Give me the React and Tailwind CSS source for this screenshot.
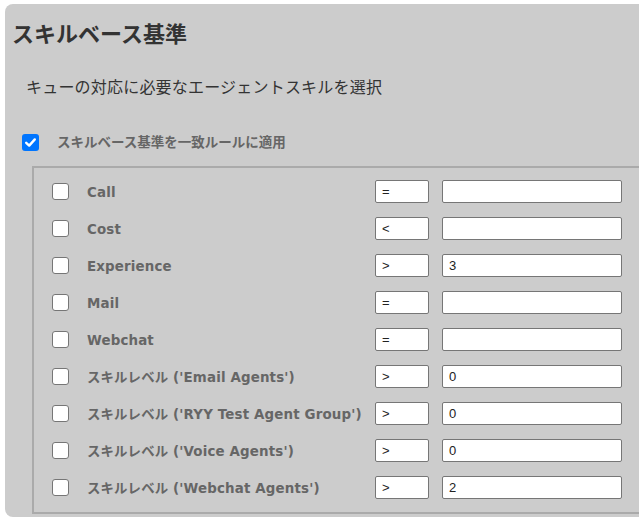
import React from "react";

const rows = [
  { label: "Call", op: "=", val: "" },
  { label: "Cost", op: "<", val: "" },
  { label: "Experience", op: ">", val: "3" },
  { label: "Mail", op: "=", val: "" },
  { label: "Webchat", op: "=", val: "" },
  { label: "スキルレベル ('Email Agents')", op: ">", val: "0" },
  { label: "スキルレベル ('RYY Test Agent Group')", op: ">", val: "0" },
  { label: "スキルレベル ('Voice Agents')", op: ">", val: "0" },
  { label: "スキルレベル ('Webchat Agents')", op: ">", val: "2" },
];

function Box({ checked }) {
  if (checked) {
    return (
      <span className="flex h-[17px] w-[17px] items-center justify-center rounded-[3px] bg-[#0075ff]">
        <svg width="13" height="13" viewBox="0 0 13 13" fill="none">
          <path d="M2.2 6.8 L5.2 9.6 L10.8 3.4" stroke="#fff" strokeWidth="2.4" strokeLinecap="round" strokeLinejoin="round" />
        </svg>
      </span>
    );
  }
  return <span className="block h-[17px] w-[17px] rounded-[3px] border border-[#767676] bg-white" />;
}

export default function App() {
  return (
    <div className="h-[520px] w-[639px] overflow-hidden bg-white pt-[4px] pl-[5px]">
      <div className="flex flex-col rounded-l-lg bg-[#cccccc] pt-[13px] pb-[3px]" style={{ fontFamily: '"Noto Sans CJK JP", sans-serif' }}>
        <h1 className="pl-[7px] text-[22px] font-bold leading-[30px] text-[#333]">スキルベース基準</h1>
        <p className="mt-[27px] pl-[21px] text-[16px] leading-[24px] tracking-[0.2px] text-[#333]">キューの対応に必要なエージェントスキルを選択</p>
        <div className="mt-[34px] flex h-[20px] items-center pl-[17px]">
          <Box checked />
          <span className="ml-[18px] pb-[3px] text-[13.5px] leading-[20px] font-bold text-[#666]">スキルベース基準を一致ルールに適用</span>
        </div>
        <div className="mt-[14px] ml-[27px] border-y-2 border-l-2 border-[#aaaaaa] pt-[5px] pb-[6px] pl-[18px]">
          {rows.map((r, i) => (
            <div key={i} className="grid h-[37px] grid-cols-[17px_306px_54px_180px] items-center">
              <Box />
              <span
                className="pt-[3px] pl-[18px] text-[13.4px] leading-[20px] font-bold tracking-[0.15px] whitespace-nowrap text-[#666]"
                style={{ fontFamily: '"DejaVu Sans", "Noto Sans CJK JP", sans-serif' }}
              >
                {r.label}
              </span>
              <div className="flex h-[23px] items-center rounded-[2px] border border-[#767676] bg-white pl-[6px] text-[13px] text-[#222]" style={{ fontFamily: '"Liberation Sans", sans-serif' }}>
                {r.op}
              </div>
              <div className="ml-[13px] flex h-[23px] w-[180px] items-center rounded-[2px] border border-[#767676] bg-white pl-[6px] text-[13px] text-[#222]" style={{ fontFamily: '"Liberation Sans", sans-serif' }}>
                {r.val}
              </div>
            </div>
          ))}
        </div>
      </div>
    </div>
  );
}
